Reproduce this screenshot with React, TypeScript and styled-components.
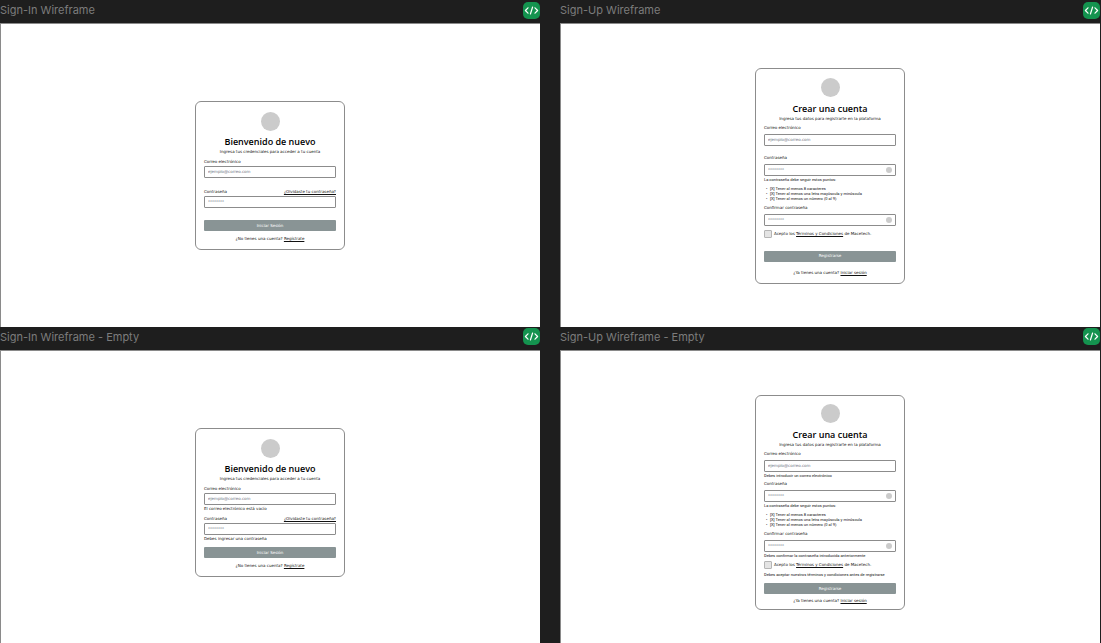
import React, { useId } from 'react';
import styled, { createGlobalStyle } from 'styled-components';

const GlobalStyle = createGlobalStyle`
  *, *::before, *::after { box-sizing: border-box; }
  body { margin: 0; background: #1e1e1e; }
`;

const Canvas = styled.main`
  height: 100vh;
  overflow: hidden;
  display: grid;
  grid-template-columns: 1fr 1fr;
  align-content: start;
  column-gap: 20px;
  padding-right: 1px;
  background: #1e1e1e;
  color: #111;
  font: 4px/8px "DejaVu Sans", sans-serif;
`;

const FrameHeader = styled.header`
  display: flex;
  align-items: center;
  justify-content: space-between;
  height: 23px;
  padding-bottom: 3px;
`;

const FrameName = styled.h2`
  margin: 0;
  color: #7c7c7c;
  font: 400 11px/16px Inter, sans-serif;
`;

const DevButton = styled.button`
  display: grid;
  place-items: center;
  width: 17px;
  height: 17px;
  padding: 0;
  border: 0;
  border-radius: 5px;
  background: #14934f;
`;

const Artboard = styled.div`
  display: grid;
  place-items: center;
  aspect-ratio: 16 / 9;
  padding-top: 2px;
  box-shadow: inset 1px 1px #8a8a8a;
  background: #fff;
`;

const Card = styled.form<{ $start: number; $end: number }>`
  display: flex;
  flex-direction: column;
  width: 150px;
  padding: ${p => p.$start}px 8px ${p => p.$end}px;
  border: 1px solid #8c8c8c;
  border-radius: 6px;
  background: #fff;
  will-change: opacity;
`;

const Avatar = styled.div`
  align-self: center;
  width: 19px;
  height: 19px;
  border-radius: 50%;
  background: #cbcbcb;
`;

const Title = styled.h1<{ $before: number }>`
  margin: ${p => p.$before}px 0 0;
  text-align: center;
  color: #000;
  font: 600 9px/12px "Open Sans", sans-serif;
`;

const Subtitle = styled.p<{ $after: number }>`
  margin: 0 0 ${p => p.$after}px;
  text-align: center;
`;

const LabelRow = styled.div<{ $gap: number }>`
  display: flex;
  justify-content: space-between;
  padding-bottom: ${p => p.$gap}px;
  white-space: nowrap;
`;

const Link = styled.a`
  color: inherit;
  text-decoration: underline;
`;

const InputBox = styled.div`
  display: flex;
  align-items: center;
  height: 12px;
  padding: 0 3px;
  border: 1px solid #8c8c8c;
  border-radius: 1px;
`;

const Input = styled.input`
  flex: 1;
  min-width: 0;
  height: 8px;
  padding: 0;
  border: 0;
  outline: 0;
  background: none;
  color: #555;
  font: inherit;
  &::placeholder { color: #6b7280; opacity: 1; }
`;

const RevealButton = styled.button`
  width: 6px;
  height: 6px;
  padding: 0;
  border: 0;
  border-radius: 50%;
  background: #cbcbcb;
`;

const Note = styled.p<{ $height: number; $small?: boolean }>`
  height: ${p => p.$height}px;
  margin: 0;
  white-space: nowrap;
  font-family: ${p => (p.$small ? 'Roboto' : '"DejaVu Sans"')}, sans-serif;
  line-height: 7px;
`;

const Rules = styled.ul`
  margin: 2px 0 3px;
  padding: 0 0 0 6px;
  list-style: none;
  white-space: nowrap;
  font: 4px/5px Roboto, sans-serif;
`;

const Rule = styled.li`
  display: flex;
  &::before { content: '•'; width: 4px; margin-left: -4px; }
`;

const CheckRow = styled.label<{ $before: number; $after: number }>`
  display: flex;
  align-items: center;
  gap: 2px;
  margin: ${p => p.$before}px 0 ${p => p.$after}px;
  white-space: nowrap;
`;

const Checkbox = styled.input`
  appearance: none;
  width: 8px;
  height: 8px;
  margin: 0;
  border: 1px solid #b5b5b5;
  border-radius: 1px;
  background: #e4e4e4;
`;

const Submit = styled.button`
  height: 11px;
  padding: 0;
  border: 0;
  border-radius: 1px;
  background: #899495;
  color: #fff;
  font: inherit;
`;

const Footer = styled.p<{ $before: number }>`
  margin: ${p => p.$before}px 0 0;
  text-align: center;
`;

type FieldProps = {
  label: string;
  type?: string;
  placeholder: string;
  gap?: number;
  aside?: React.ReactNode;
  reveal?: boolean;
};

function Field({ label, type = 'password', placeholder, gap = 0, aside, reveal }: FieldProps) {
  const id = useId();
  return (
    <div>
      <LabelRow $gap={gap}>
        <label htmlFor={id}>{label}</label>
        {aside}
      </LabelRow>
      <InputBox>
        <Input id={id} type={type} placeholder={placeholder} />
        {reveal && <RevealButton type="button" aria-label="Mostrar contraseña" />}
      </InputBox>
    </div>
  );
}

function Frame({ name, children }: { name: string; children: React.ReactNode }) {
  return (
    <section>
      <FrameHeader>
        <FrameName>{name}</FrameName>
        <DevButton type="button" aria-label="Dev">
          <svg width="15" height="11" viewBox="0 0 15 11" fill="none" stroke="#fff" strokeWidth="1.2" strokeLinecap="round" strokeLinejoin="round">
            <path d="M4 2.8 1.4 5.5 4 8.2M11 2.8l2.6 2.7L11 8.2M8.6 2 6.4 9" />
          </svg>
        </DevButton>
      </FrameHeader>
      <Artboard>{children}</Artboard>
    </section>
  );
}

function SignIn({ empty }: { empty?: boolean }) {
  return (
    <Card $start={10} $end={6}>
      <Avatar />
      <Title $before={5}>Bienvenido de nuevo</Title>
      <Subtitle $after={2}>Ingresa tus credenciales para acceder a tu cuenta</Subtitle>
      <Field label="Correo electrónico" type="email" placeholder="ejemplo@correo.com" />
      <Note $height={10}>{empty && 'El correo electrónico está vacío'}</Note>
      <Field
        label="Contraseña"
        placeholder="********"
        aside={<Link href="#recuperar">¿Olvidaste tu contraseña?</Link>}
      />
      <Note $height={12}>{empty && 'Debes ingresar una contraseña'}</Note>
      <Submit type="button">Iniciar Sesión</Submit>
      <Footer $before={4}>
        ¿No tienes una cuenta? <Link href="#registro">Regístrate</Link>
      </Footer>
    </Card>
  );
}

function SignUp({ empty }: { empty?: boolean }) {
  return (
    <Card $start={empty ? 8 : 9} $end={empty ? 4 : 6}>
      <Avatar />
      <Title $before={6}>Crear una cuenta</Title>
      <Subtitle $after={1}>Ingresa tus datos para registrarte en la plataforma</Subtitle>
      <Field label="Correo electrónico" type="email" placeholder="ejemplo@correo.com" gap={2} />
      <Note $height={8} $small>{empty && 'Debes introducir un correo electrónico'}</Note>
      <Field label="Contraseña" placeholder="********" gap={2} reveal />
      <Note $height={8} $small>La contraseña debe seguir estos puntos:</Note>
      <Rules>
        <Rule>[X] Tener al menos 8 caracteres</Rule>
        <Rule>[X] Tener al menos una letra mayúscula y minúscula</Rule>
        <Rule>[X] Tener al menos un número (0 al 9)</Rule>
      </Rules>
      <Field label="Confirmar contraseña" placeholder="********" gap={2} reveal />
      {empty && <Note $height={7} $small>Debes confirmar la contraseña introducida anteriormente</Note>}
      <CheckRow $before={empty ? 2 : 4} $after={empty ? 2 : 13}>
        <Checkbox type="checkbox" />
        <span>
          Acepto los <Link href="#terminos">Términos y Condiciones</Link> de Macetech.
        </span>
      </CheckRow>
      {empty && (
        <Note $height={12} $small>Debes aceptar nuestros términos y condiciones antes de registrarse</Note>
      )}
      <Submit type="button">Registrarse</Submit>
      <Footer $before={empty ? 3 : 7}>
        ¿Ya tienes una cuenta? <Link href="#ingreso">Iniciar sesión</Link>
      </Footer>
    </Card>
  );
}

export default function App() {
  return (
    <>
      <GlobalStyle />
      <Canvas>
        <Frame name="Sign-In Wireframe"><SignIn /></Frame>
        <Frame name="Sign-Up Wireframe"><SignUp /></Frame>
        <Frame name="Sign-In Wireframe - Empty"><SignIn empty /></Frame>
        <Frame name="Sign-Up Wireframe - Empty"><SignUp empty /></Frame>
      </Canvas>
    </>
  );
}
